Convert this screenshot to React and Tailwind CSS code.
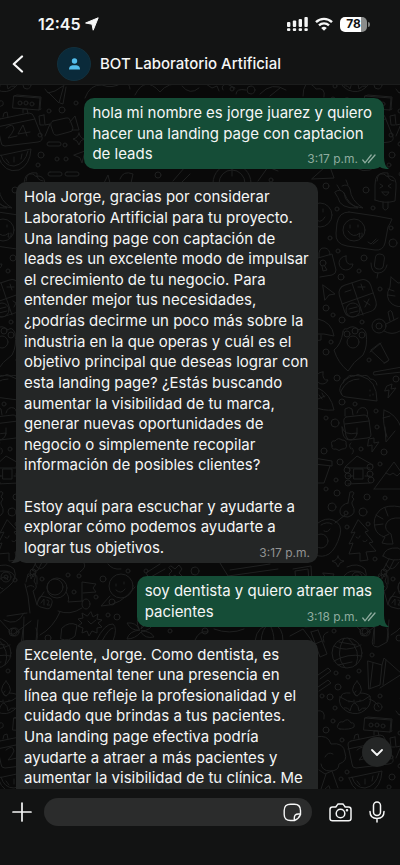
import React from "react";

const CIRCLES = [
  [326, 186, 3], [366, 190, 3], [337, 209, 2], [373, 208, 2], [330, 238, 2], [393, 243, 4], [391, 228, 2],
  [338, 251, 2], [364, 258, 3], [359, 271, 2], [341, 277, 3], [380, 289, 2], [326, 308, 3], [333, 315, 2],
  [342, 320, 3], [362, 322, 2], [331, 342, 2], [326, 352, 3], [369, 360, 2], [337, 378, 3], [396, 379, 3],
  [342, 402, 3], [355, 404, 2], [376, 411, 2], [326, 418, 2], [335, 423, 4], [377, 427, 2], [324, 451, 3],
  [361, 449, 2], [384, 452, 3], [340, 462, 3], [380, 464, 2], [336, 480, 2], [326, 489, 2], [337, 493, 3],
  [367, 497, 3], [385, 498, 2], [332, 507, 4], [363, 512, 4], [347, 527, 2], [368, 524, 2], [375, 559, 2],
  [384, 572, 3], [334, 631, 2], [364, 632, 4], [372, 655, 2], [336, 673, 2], [348, 677, 2], [359, 671, 2],
  [338, 687, 3], [330, 697, 3], [322, 696, 2], [380, 696, 2], [378, 707, 4], [335, 708, 2], [333, 721, 2],
  [326, 730, 3], [342, 740, 2], [347, 772, 2], [341, 779, 2], [49, 733, 2], [62, 732, 3], [76, 725, 2],
  [40, 757, 2], [41, 777, 3], [65, 767, 2], [57, 781, 2], [66, 781, 2], [38, 787, 2], [15, 580, 2],
  [68, 575, 2], [79, 576, 2], [103, 579, 3], [42, 579, 2], [74, 592, 2], [96, 597, 2], [108, 615, 2],
  [117, 617, 3], [15, 632, 4], [48, 638, 3], [128, 571, 2], [146, 571, 2], [195, 571, 4], [170, 631, 2],
  [242, 785, 3], [271, 802, 2], [158, 797, 3], [205, 631, 3], [251, 712, 4], [232, 711, 2],
];

function DoodleSheet() {
  return (
    <g id="doodles" fill="none" stroke="#1f2020" strokeWidth="1" strokeLinecap="round" strokeLinejoin="round">
      {CIRCLES.map(([x, y, r]) => (
        <circle key={`${x}-${y}`} cx={x} cy={y} r={r} />
      ))}
      {/* smiley, chillies, ice pop */}
      <circle cx="320" cy="215" r="12" />
      <path d="M314 217q6 9 11 0M323 209v3" />
      <path d="M335 192q5-4 9 1q5 12 14 15q-18 1-20-10zM342 186q6-3 8 3q1 12 13 19q-18-2-19-15M340 190l-3-5M348 185l-2-5" />
      <path d="M375 200V185q0-13 9-11q3 4 6 2q7 1 6 12l-1 13q-10 3-20-1zM383 202v6q2 4 5 0v-6M380 184l3 2-3 2M391 184l-3 2 3 2M382 192h7q-3 7-7 0" />
      {/* speech bubble face */}
      <path d="M349 212l27 4 16 3q-2 5-4 8l-3 16q-2 8-10 7l-28-4q-12-2-11-13l1-10q2-11 12-11z" />
      <circle cx="354" cy="230" r="11" />
      <path d="M348 231q5 8 12 2l-1 4q4 1 3-4M350 225v3M358 225v2M368 242l3 2 5-5M373 244l5-4" />
      {/* padlock, moon, microphone */}
      <path d="M318 258l14-4 4 16q0 4-4 5l-12 2M319 257q-1-10 6-9q5 1 5 7" />
      <circle cx="323" cy="263" r="3" /><path d="M322 266l1 5 4-1-3-5" />
      <path d="M346 256a7 7 0 1 0 7 8q-8 2-7-8z" />
      <rect x="375" y="254" width="9" height="15" rx="4" transform="rotate(8 379 261)" />
      <path d="M371 263q0 10 7 10t9-8M378 273l-1 5" />
      {/* cursor, calculator, cat */}
      <path d="M323 285l12 9-6 1-4 5z" />
      <rect x="341" y="282" width="33" height="33" rx="8" transform="rotate(-18 357 298)" />
      <path d="M352 283l11 32M342 304l31-11M345 292l6-2M358 287h7M361 284l2 6M364 301l6 4M369 299l-4 8" />
      <circle cx="353" cy="310" r="7" /><path d="M349 309l8-2M350 313l8-2" />
      <path d="M391 277l7 6 8-1M391 277l-1 10q-6 10 2 17q6 4 12 2M388 289l6 2M388 295l7 1" />
      {/* mushroom, paw, tube, helicopter */}
      <path d="M318 319q14 3 16 17q-10-3-20-2M321 335v5q-5 2-8-1" />
      <path d="M343 332q-2 13-9 18q4 13 14 21q5-9 15-16q5-9 3-22q-3-7-7-3q-6-6-12-1q-4-1-4 3z" />
      <circle cx="353" cy="342" r="6" /><circle cx="347" cy="334" r="3" /><circle cx="355" cy="331" r="3" /><circle cx="362" cy="335" r="3" />
      <path d="M371 350l9-7 9 17-4 3zM370 352l11-9M384 363l4-2" />
      <circle cx="379" cy="326" r="7" /><circle cx="379" cy="326" r="3" />
      <path d="M386 324l12-6M384 331q8 5 16 0M390 321l-2-9q3-3 4 0l2 8M374 372l28-5M374 372q-2 3 1 3l27-3" />
      {/* taco, bolt, football */}
      <path d="M342 394q-4-2-1-9q8-12 20-9q16 4 16 25l-31-4q-6-1-5-6q6-12 18-12M343 383q0-4 4-5q2-4 7-2q4-3 8 0q6-2 8 3q6 0 7 6" />
      <path d="M370 390v1M373 394v1M370 395v1M387 386l5-2-1 5 5-1-8 10 1-8-4 1z" />
      <path d="M323 372a6 6 0 1 0 5 8q-6 1-5-8zM318 388q13 6 16 22q-12 1-19-3M318 399l7-3M319 395l3 4M322 393l2 4" />
      {/* backpack, rocket, cloud, bolt */}
      <path d="M346 417l18-2q4 0 5 5l2 15q0 3-4 3l-16 2q-4 0-5-4l-2-13q-1-5 2-6zM345 424l24-3M345 416v-7q4-3 7 0l1 6M357 413q2-7 8-5q4 3 2 9M342 427q2 9 15 6q-1 7-8 7q-7-1-7-13zM357 428v6" />
      <path d="M384 410q12 4 17 17M384 410q-2 13 3 27M385 427l1 15 9-11M383 418l7-2" />
      <path d="M323 444q-2-6 3-5q3-4 7-1q5 0 4 4q2 5-4 5q-3 3-6 0q-5 1-4-3z" transform="translate(9 2)" />
      <path d="M369 439l5-1v5l5-1-7 10v-7l-4 1z" />
      <path d="M351 449q-3-4 0-6M352 454q3-3 0-6" />
      {/* flower pot, log house, mountain */}
      <path d="M314 458l18 3v5l-18-2M330 466l-6 17h-9" />
      <path d="M345 467l12-11 16 9M348 468h22M348 476h5M365 476h5M348 484l22-1" />
      <rect x="354" y="469" width="9" height="10" />
      <circle cx="347" cy="470" r="3" /><circle cx="348" cy="476" r="3" /><circle cx="348" cy="483" r="3" /><circle cx="370" cy="467" r="3" /><circle cx="370" cy="474" r="3" /><circle cx="371" cy="480" r="3" />
      <path d="M374 489l20-27 14 20M374 489h36M386 473l4 2 3-2 4 3 3-3" />
      {/* key, avocado, pine tree, shrimp */}
      <path d="M348 503l2-11q4-1 4 1l-2 4 2 2-2 3v2q6 10-4 13q-9 0-8-7q2-6 8-7z" /><circle cx="346" cy="513" r="2" />
      <path d="M345 515l-10 8M318 523q8-6 15-3q10 4 7 15q-4 14-11 19q-7 4-13 1M321 525q6-4 11-1M324 531q4 2 6-2" />
      <circle cx="321" cy="541" r="7" />
      <path d="M358 520l-7 13 4-1-6 12 4-1-4 11 11-1v8l8-1-2-8 10-1-7-8 4-1-8-10 3-1zM356 537q3 3 4-1M363 541q3 2 4-1" />
      <path d="M401 507q-14-3-21 3q-8 8-5 18q2 7 10 9l-3 6 5 1 6 0-2-10q-7-4-5-10q3-7 14-6M376 515l7 4M375 525l8-1M385 508l3 8M383 537l6-3" />
      <path d="M338 556q1 5 6 5q-5 1-6 6q-1-5-6-6q5 0 6-5zM383 556q2-9 15-8q6 3 6 10q-11 5-21-2zM389 559l-6 11q3 3 6 0l5-10" />
      {/* row beneath the long reply */}
      <path d="M293 569l18-3 1 17M296 583l-1-12 13-2 1 12M323 573l11 1-4 8zM341 580q6-10 14-9q10 0 11 7M350 580q6-6 9 0M379 577q4-5 5 0 4-4 4 1v6" />
      <path d="M220 563l8 13 50-7M230 570l40-6M165 569l-16 9-3-5 14-9M171 566l4 3 4-4 3 4-3 4 3 3-4 3-3-4-4 3-2-4 3-3-3-3z" />
      <path d="M84 563q3 4-4 9M108 564q4 6 13 5M35 564q4 8 9 3l4-5M3 589q-2 0-3-2M6 569" />
      {/* pin, astronaut with flag */}
      <path d="M-4 567q11-5 18 2q4 10-5 17l-11 9" /><circle cx="6" cy="577" r="5" /><circle cx="6" cy="577" r="2" />
      <circle cx="57" cy="588" r="10" /><circle cx="55" cy="587" r="8" />
      <path d="M26 582l2-8q3-1 3 5l3-6q3 0 0 8q5 7-1 10l4 14M25 584l3 12 2 17M27 587q4-3 7 0M44 592l-6 9M66 592q4 5 2 10l15-1M82 601v-19l14 2-3 4 3 4-13 1M82 608q-12 8-24 3M60 612q-7 16-20 23M27 613l-20 3M31 621L14 634q-5 1-5-4L-2 618M24 617l-1 27M38 620l-2 21M24 613q-7 14-20 7" />
      <ellipse cx="86" cy="604" rx="4" ry="5" />
      <rect x="38" y="597" width="14" height="11" rx="4" transform="rotate(16 45 602)" />
      <path d="M41 603l3-4v6M47 600q4 0 0 5h3" />
      {/* planet, starburst, leaves */}
      <circle cx="121" cy="586" r="12" />
      <path d="M110 596l-9 10q20 0 34-19M116 584v2M124 582v2M116 590q5 5 9-1" /><circle cx="112" cy="602" r="3" />
      <path d="M91 612l2 5 5-3-1 5 5 1-4 3 4 4-5 1 0 5-5-2-3 5-2-5-5 2 1-5-5-2 4-3-4-4 5-1-1-5 5 3zM88 621l3 3 5-4" />
      <path d="M139 629q-4-8 1-14q5 6 1 14q6-7 13-7q-3 9-13 9q10 0 13 6q-9 2-13-5q-6 7-14 7q2-8 13-9q-9 1-13-7q9-1 12 6zM62 628q7-7 15-3l-2 11q-6 6-14 3zM96 641q9-18 17-17q5 4 0 17M102 641q7-13 11-13" />
      {/* row under the second sent message */}
      <path d="M195 640q4-10 13-8M255 641q2-17 18-16q10 1 10 16M261 641q1-13 7-16M274 641q0-9-4-16M290 636l13-7 9 12M214 629q16 6 30 0" />
      {/* bamboo, sock, globe, flags */}
      <path d="M311 632l7-2M318 630l9 24-7 3-9-25M315 644l7-3M324 642q-3-8 4-10M305 627l13-1M374 629l-1 9q-3 9 5 9l9-5q3-6 0-14M318 675l10-7 3 3-11 8M318 687l10-7 3 3-12 8" />
      <circle cx="347" cy="653" r="15" />
      <path d="M334 646q11 7 27-1M334 661q14-8 28-5M344 638q-10 17 1 30M348 638q14 13 8 27M339 642l17 3M338 665l14-3" />
      <path d="M368 661l14 4-2 20-11 4zM382 665l2-7 18 16-22 14M370 688l3-25M383 685l3-25" />
      {/* oil lamp, cloud, cassette box */}
      <path d="M357 681q-9 10 0 15q9-5 0-15zM356 691q-4 4 1 5M340 697q-3 9 8 15q10 4 17-2q7-5 5-14q-14 12-30 1zM341 697q0-5 9-4M360 693q7 0 10 3M344 708q4-1 6 3q2-8 5-8q4 3 4 8q3-4 7-3M349 701v1M354 700v1M360 700v1" />
      <path d="M340 729q-4-1-2-4q1-4 5-3q5-5 8 1q4-1 3 4q-4 3-14 2z" />
      <path d="M365 718l26 2-1 12-26-2zM365 718l3-1 24 2-1 12M390 732l2-1" />
      <circle cx="371" cy="725" r="2" /><circle cx="377" cy="725" r="2" /><circle cx="383" cy="726" r="2" />
      <path d="M391 735l1 10 5-1-5 12M391 735l-5 1 1 9 4 0" transform="translate(4 2)" />
      {/* calendar, watermelon, broccoli */}
      <path d="M351 741l29-6q4 0 5 4l8 20q1 4-4 5l-33 4q-4 0-4-4l-4-19q-1-3 3-4zM348 749l38-8M354 739l1-4 3-1 1 5M374 735l0-4 4 0 1 5" />
      <path d="M357 750q7-6 8 1q-2 5-6 9l9-2M378 758l-4-11-5 9 12-2" />
      <path d="M349 778l33-7q-1 16-12 21q-15 4-21-14zM352 777q3 11 13 11q11-2 14-15M357 781l3 4M365 779v5M373 776l-1 5" />
      <path d="M316 737q12-3 15 7q13-2 14 9q3 8-6 11q0 7-9 7q-8 0-9-7M325 757q3-6 8-3M319 770l6 4 7-3 6 17M326 774l-5 15" />
      {/* fries, video camera, sparkle, pills */}
      <path d="M45 711l3 4 7-2 8-5M48 714l11 11 5-18M53 703l-4-4M60 725l3 1 3-17M18 699q7 2 10 8" />
      <path d="M53 741l13-3q3-1 4 2l3 8q0 4-4 4l-11 3q-4 1-5-3l-2-6q-1-4 2-5zM70 742l5-6 4 14-7 0" transform="translate(0 2)" />
      <path d="M79 755q1 5 5 6q-4 1-5 6q-1-5-6-6q5-1 6-6zM74 777l11-4-3 12-2-5z" />
      <rect x="47" y="764" width="14" height="4" rx="2" /><rect x="48" y="794" width="14" height="4" rx="2" /><rect x="65" y="794" width="14" height="4" rx="2" />
      <path d="M26 803q0-10 11-8q-1 7 6 8" />
      {/* wallpaper along the header edge and under the first message */}
      <path d="M85 720q5-14 17-13q10 4 20-2q8-1 8 6M135 717q10-20 25-3q8-10 22-8M182 708q8 10 17 2M206 706l6 4 5-2 2 5M223 712q-3-5 4-6l8 4M236 716q0-6 10-4M260 716q12-13 26-4M270 718l10-8M306 706q6-1 10 5q10-2 8 8M303 718q0-15 10-14" />
      <path d="M213 805a19 19 0 0 1 38 0M219 805a13 13 0 0 1 26 0M232 786v12M258 803l10-14 10 4M312 801l22-1-5-14zM173 803l12-14M180 806l10-10M120 801q3-9 13-5l-2 9M104 805l4-8 2 8" />
    </g>
  );
}

function Wallpaper() {
  return (
    <svg className="pointer-events-none absolute inset-0 h-full w-full" aria-hidden="true">
      <g transform="translate(0 -85)">
        <DoodleSheet />
        <use href="#doodles" x="-351" />
        <use href="#doodles" x="351" />
        <use href="#doodles" y="-622" />
        <use href="#doodles" x="-351" y="-622" />
        <use href="#doodles" x="351" y="-622" />
      </g>
    </svg>
  );
}

function StatusBar() {
  return (
    <div className="flex h-12 items-center justify-between pr-[30px] pl-[38px]">
      <div className="flex items-center gap-1 text-base font-semibold">
        <span>12:45</span>
        <svg className="size-[14px]" viewBox="0 0 14 14" aria-hidden="true">
          <path d="M13.2 0.8L8.2 13.2 7 7.2 0.6 6z" fill="currentColor" stroke="currentColor" strokeLinejoin="round" />
        </svg>
      </div>
      <div className="flex items-center gap-[7px]">
        <svg className="h-[14px] w-[21px]" viewBox="0 0 21 14" fill="currentColor" aria-hidden="true">
          <rect x="0" y="5" width="3.4" height="5" rx="1" />
          <rect x="5.800" y="3.500" width="3.4" height="6.500" rx="1" />
          <rect x="11.600" y="2" width="3.4" height="8" rx="1" />
          <rect x="17.400" y="0" width="3.4" height="10" rx="1" />
          <rect x="0" y="11.200" width="3.4" height="2.800" rx="1" />
          <rect x="5.800" y="11.200" width="3.4" height="2.800" rx="1" />
          <rect x="11.600" y="11.200" width="3.4" height="2.800" rx="1" />
          <rect x="17.400" y="11.200" width="3.4" height="2.800" rx="1" />
        </svg>
        <svg className="h-[14px] w-[18px]" viewBox="0 0 18 14" fill="none" stroke="currentColor" aria-hidden="true">
          <path d="M1 5.2a11.4 11.4 0 0 1 16 0" strokeWidth="2.4" />
          <path d="M4 8.4a7.1 7.1 0 0 1 10 0" strokeWidth="2.3" />
          <path d="M9 13.8L6.2 11a4 4 0 0 1 5.6 0z" fill="currentColor" stroke="none" />
        </svg>
        <div className="flex items-center gap-px">
          <span className="flex h-[15px] w-[27px] items-center justify-center rounded-[5px] bg-linear-to-r from-white from-78% to-[#8b8d8c] to-78% text-xs leading-none font-bold text-[#111212]">
            78
          </span>
          <span className="h-[5px] w-[2px] rounded-r-full bg-[#7d7f7e]" />
        </div>
      </div>
    </div>
  );
}

function Header() {
  return (
    <header className="relative h-[85px] shrink-0 border-b border-[#1b1c1c] bg-[#131414]">
      <StatusBar />
      <div className="flex h-8 items-center pl-3">
        <button type="button" aria-label="Atrás" className="w-[45px]">
          <svg className="h-[18px] w-3" viewBox="0 0 12 18" fill="none" stroke="currentColor" strokeWidth="2.2" strokeLinecap="round" strokeLinejoin="round">
            <path d="M10 1.5L1.8 9 10 16.500" />
          </svg>
        </button>
        <span className="flex size-[34px] items-center justify-center rounded-full border border-[#12303d] bg-[#0a2a3a]">
          <svg className="h-3 w-[11px]" viewBox="0 0 11 12" fill="#53bdeb" aria-hidden="true">
            <circle cx="5.500" cy="3" r="2.700" />
            <path d="M0 11.500Q0 7.500 3.500 7.200h4Q11 7.500 11 11.500z" />
          </svg>
        </span>
        <h1 className="ml-[9px] text-[15px] font-medium whitespace-nowrap">BOT Laboratorio Artificial</h1>
      </div>
    </header>
  );
}

function Ticks() {
  return (
    <svg className="h-[10px] w-[14px]" viewBox="0 0 14 10" fill="none" stroke="currentColor" strokeWidth="1.3" strokeLinecap="round" aria-hidden="true">
      <path d="M0.800 6L3 8.800 9.200 1M6.500 8.500L13 1" />
    </svg>
  );
}

function Message({ sent, lines, time }) {
  return (
    <li className={sent ? "relative self-end" : "relative w-[302px] self-start"}>
      <svg
        className={sent ? "absolute -right-[5px] bottom-0 h-3 w-3 text-[#154d37]" : "absolute bottom-0 -left-[5px] h-3 w-3 -scale-x-100 text-[#242626]"}
        viewBox="0 0 12 12"
        fill="currentColor"
        aria-hidden="true"
      >
        <path d="M0 0h7q0 9 5 12Q6 12 3 10H0z" />
      </svg>
      <div
        className={
          sent
            ? "relative flow-root rounded-[10px] bg-[#154d37] pt-[5px] pr-3 pb-1 pl-2 whitespace-nowrap"
            : "relative flow-root rounded-[10px] bg-[#242626] px-2 pt-[5px] pb-1 whitespace-nowrap"
        }
      >
        {lines.map((line, i) => (
          <React.Fragment key={i}>
            {i > 0 && <br />}
            {line && <span>{line}</span>}
          </React.Fragment>
        ))}
        {time && (
          <span
            className={
              sent
                ? "float-right mt-[9px] -mr-1 flex items-center gap-1 text-[#8fac9f]"
                : "float-right mt-[9px] flex items-center text-[#929393]"
            }
          >
            <time className="text-xs leading-3">{time}</time>
            {sent && <Ticks />}
          </span>
        )}
      </div>
    </li>
  );
}

const MESSAGES = [
  {
    sent: true,
    time: "3:17 p.m.",
    lines: ["hola mi nombre es jorge juarez y quiero", "hacer una landing page con captacion", "de leads"],
  },
  {
    sent: false,
    time: "3:17 p.m.",
    lines: [
      "Hola Jorge, gracias por considerar",
      "Laboratorio Artificial para tu proyecto.",
      "Una landing page con captación de",
      "leads es un excelente modo de impulsar",
      "el crecimiento de tu negocio. Para",
      "entender mejor tus necesidades,",
      "¿podrías decirme un poco más sobre la",
      "industria en la que operas y cuál es el",
      "objetivo principal que deseas lograr con",
      "esta landing page? ¿Estás buscando",
      "aumentar la visibilidad de tu marca,",
      "generar nuevas oportunidades de",
      "negocio o simplemente recopilar",
      "información de posibles clientes?",
      "",
      "Estoy aquí para escuchar y ayudarte a",
      "explorar cómo podemos ayudarte a",
      "lograr tus objetivos.",
    ],
  },
  { sent: true, time: "3:18 p.m.", lines: ["soy dentista y quiero atraer mas", "pacientes"] },
  {
    sent: false,
    lines: [
      "Excelente, Jorge. Como dentista, es",
      "fundamental tener una presencia en",
      "línea que refleje la profesionalidad y el",
      "cuidado que brindas a tus pacientes.",
      "Una landing page efectiva podría",
      "ayudarte a atraer a más pacientes y",
      "aumentar la visibilidad de tu clínica. Me",
      "",
      "",
    ],
  },
];

function Composer() {
  return (
    <footer className="relative flex h-[76px] shrink-0 items-start bg-[#121313] px-3 pt-[9px]">
      <button type="button" aria-label="Adjuntar" className="flex h-7 w-8 items-center">
        <svg className="size-5" viewBox="0 0 20 20" fill="none" stroke="currentColor" strokeWidth="1.700" strokeLinecap="round">
          <path d="M10 1v18M1 10h18" />
        </svg>
      </button>
      <div className="flex h-7 min-w-0 flex-1 items-center rounded-full bg-[#2b2c2c] pr-[10px] pl-4">
        <input type="text" aria-label="Mensaje" className="min-w-0 flex-1 bg-transparent text-[15px] outline-none" />
        <button type="button" aria-label="Stickers">
          <svg className="size-[19px]" viewBox="0 0 19 19" fill="none" stroke="currentColor" strokeWidth="1.400" strokeLinejoin="round">
            <path d="M11.500 17.500H7.500Q1.200 17.500 1.200 11.500v-4Q1.200 1.200 7.500 1.200h4Q17.500 1.200 17.500 7.500v4q-1.500 4-6 6zM11.300 17.400v-2.400q0-4 4-4h2.100" />
          </svg>
        </button>
      </div>
      <button type="button" aria-label="Cámara" className="ml-[17px] flex h-7 items-center">
        <svg className="h-[19px] w-[23px]" viewBox="0 0 23 19" fill="none" stroke="currentColor" strokeWidth="1.500" strokeLinejoin="round">
          <path d="M3.500 4h3.300l1.500-2.200Q8.700 1 9.500 1h4q.8 0 1.200.8L16.200 4h3.300q2.500 0 2.500 2.500v9q0 2.300-2.500 2.300h-16Q1 17.800 1 15.500v-9Q1 4 3.500 4z" />
          <circle cx="11.500" cy="10.500" r="4.300" />
          <circle cx="18" cy="7.300" r="0.500" fill="currentColor" />
        </svg>
      </button>
      <button type="button" aria-label="Grabar audio" className="mr-[3px] ml-[17px] flex h-7 items-center">
        <svg className="h-[22px] w-4" viewBox="0 0 16 22" fill="none" stroke="currentColor" strokeWidth="1.500" strokeLinecap="round">
          <rect x="4.500" y="1" width="7" height="13.500" rx="3.500" />
          <path d="M1 10.500q0 7 7 7t7-7M8 17.500V21" />
        </svg>
      </button>
    </footer>
  );
}

export default function App() {
  return (
    <div className="flex h-screen flex-col overflow-hidden bg-[#090909] font-['Inter','Liberation_Sans',sans-serif] text-[#f5f6f6]">
      <Header />
      <main className="relative min-h-0 flex-1 overflow-hidden">
        <Wallpaper />
        <ol className="relative flex flex-col gap-[13px] px-4 pt-[13px] text-[15px] leading-snug">
          {MESSAGES.map((message, i) => (
            <Message key={i} {...message} />
          ))}
        </ol>
        <button
          type="button"
          aria-label="Ir al final"
          className="absolute right-2 bottom-[22px] flex size-[30px] items-center justify-center rounded-full bg-[#242626]"
        >
          <svg className="h-[7px] w-3" viewBox="0 0 12 7" fill="none" stroke="currentColor" strokeWidth="1.800" strokeLinecap="round" strokeLinejoin="round">
            <path d="M1 1l5 5 5-5" />
          </svg>
        </button>
      </main>
      <Composer />
    </div>
  );
}
